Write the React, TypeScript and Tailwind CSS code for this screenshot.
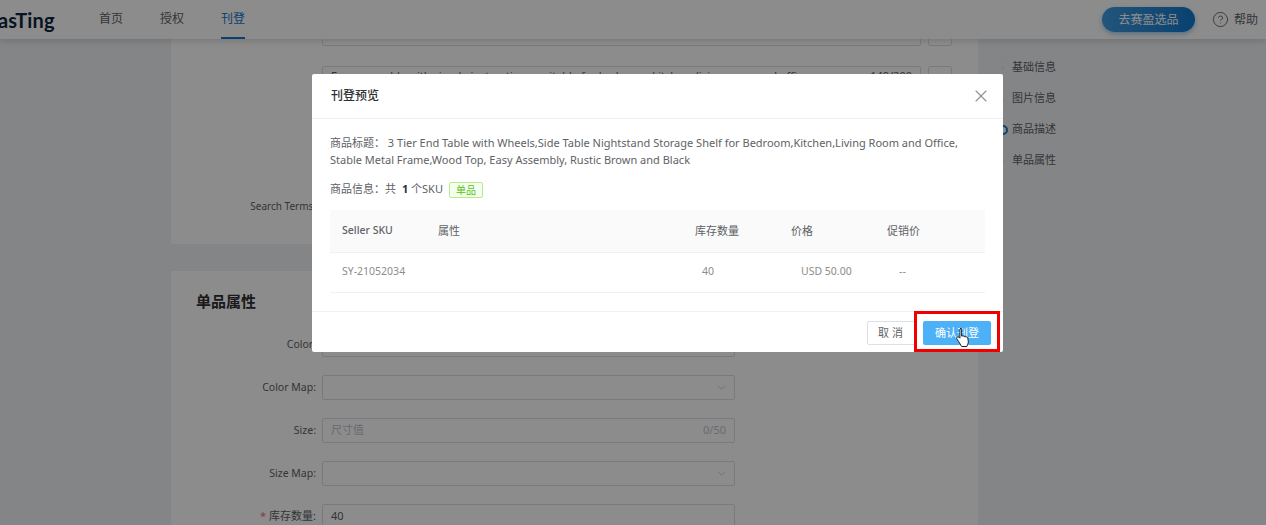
import React from 'react';
import { ChevronDown, CircleHelp, X } from 'lucide-react';

const font = "font-['Noto_Sans','Noto_Sans_CJK_SC',sans-serif]";

const SelectField: React.FC<{ label: string }> = ({ label }) => (
  <div className="flex items-center h-[25px]">
    <label className="w-[151px] pr-[6px] text-right text-[10.5px] text-[#606266]">{label}:</label>
    <div className="w-[413px] h-[25px] border border-[#dcdfe6] rounded-[2px] bg-white flex items-center justify-end pr-[6px]">
      <ChevronDown size={13} strokeWidth={1.5} className="text-[#c0c4cc]" />
    </div>
  </div>
);

const Anchor: React.FC<{ text: string; active?: boolean }> = ({ text, active }) => (
  <div className="flex items-center h-[31px]">
    <span
      className={
        active
          ? 'w-[10px] h-[10px] ml-[-5px] mr-[4px] rounded-full border-2 border-[#1677c9] bg-white'
          : 'w-[4px] h-[4px] ml-[-2px] mr-[7px] rounded-full bg-[#e8eaef]'
      }
    />
    <span className="text-[11px] text-[#606266]">{text}</span>
  </div>
);

const ListingPage: React.FC = () => (
  <div className="h-full flex flex-col bg-[#f0f2f5]">
    <header className="h-[39px] shrink-0 bg-white shadow-[0_2px_6px_rgba(0,0,0,0.15)] flex items-center relative z-10">
      <span className="ml-[-2px] w-[101px] font-['Lato',sans-serif] text-[20px] font-bold tracking-[0.2px] text-[#12263f]">asTing</span>
      <nav className="flex gap-[37px] text-[12px] text-[#5f6368] h-full">
        <a className="leading-[38px]">首页</a>
        <a className="leading-[38px]">授权</a>
        <a className="leading-[38px] text-[#1677c9] border-b-2 border-[#1677c9] h-[39px]">刊登</a>
      </nav>
      <div className="ml-auto flex items-center mr-[1px]">
        <button className="w-[93px] h-[25px] rounded-full bg-gradient-to-r from-[#3f9be0] to-[#0d78cc] text-white text-[12px] shadow-[0_2px_5px_rgba(13,120,204,0.4)]">去赛盈选品</button>
        <CircleHelp size={17} strokeWidth={1.3} className="ml-[17px] text-[#606266]" />
        <span className="ml-[5px] mr-[7px] text-[12px] text-[#606266]">帮助</span>
      </div>
    </header>
    <main className="flex-1 min-h-0 overflow-hidden flex pl-[171px]">
      <div className="w-[807px] shrink-0 flex flex-col">
        <section className="h-[205px] shrink-0 bg-white overflow-hidden pl-[151px] pr-[26px] flex flex-col">
          <div className="flex gap-[7px] mt-[-12px]">
            <div className="flex-1 h-[19px] border border-[#dcdfe6] rounded-[2px] pl-[8px] text-[11px] leading-[8px] text-[#606266] overflow-hidden whitespace-nowrap">
              Storage Organizer Shelf, Fully Assembled, Easy to Clean Top for Everyday Use
            </div>
            <div className="w-[24px] h-[19px] border border-[#dcdfe6] rounded-[2px]" />
          </div>
          <div className="flex gap-[7px] mt-[20px]">
            <div className="flex-1 h-[25px] border border-[#dcdfe6] rounded-[2px] px-[8px] pt-[2px] text-[11px] leading-[14px] text-[#606266] overflow-hidden whitespace-nowrap flex justify-between">
              <span>Easy assembly with simple instructions, suitable for bedroom, kitchen, living room and office</span>
              <span>149/200</span>
            </div>
            <div className="w-[24px] h-[25px] border border-[#dcdfe6] rounded-[2px]" />
          </div>
          <label className="mt-[108px] ml-[-151px] w-[145px] text-right text-[10px] leading-[14px] text-[#606266] whitespace-nowrap">Search Terms:</label>
        </section>
        <section className="mt-[27px] flex-1 bg-white pt-[20px]">
          <h2 className="pl-[25px] text-[15px] leading-[20px] font-semibold text-[#303133]">单品属性</h2>
          <div className="mt-[21px] flex flex-col gap-[18px]">
            <SelectField label="Color" />
            <SelectField label="Color Map" />
            <div className="flex items-center h-[25px]">
              <label className="w-[151px] pr-[6px] text-right text-[10.5px] text-[#606266]">Size:</label>
              <div className="w-[413px] h-[25px] border border-[#dcdfe6] rounded-[2px] bg-white flex items-center justify-between px-[8px] text-[11px]">
                <span className="text-[#c0c4cc]">尺寸值</span>
                <span className="text-[#c0c4cc]">0/50</span>
              </div>
            </div>
            <SelectField label="Size Map" />
            <div className="flex items-center h-[25px]">
              <label className="w-[151px] pr-[6px] text-right text-[11px] text-[#606266]"><span className="text-[#f56c6c] mr-[3px]">*</span>库存数量:</label>
              <div className="w-[413px] h-[25px] border border-[#dcdfe6] rounded-[2px] bg-white flex items-center px-[8px] text-[11px] text-[#606266]">40</div>
            </div>
          </div>
        </section>
      </div>
      <aside className="ml-[24px] mt-[13px] h-[124px] border-l border-[#eceef2]">
        <Anchor text="基础信息" />
        <Anchor text="图片信息" />
        <Anchor text="商品描述" active />
        <Anchor text="单品属性" />
      </aside>
    </main>
  </div>
);

const HandCursor: React.FC = () => (
  <svg className="absolute left-[955px] top-[327px] z-40" width="20" height="22" viewBox="0 0 20 22">
    <path
      d="M6 1.5c1 0 1.6.7 1.6 1.6v6l1-.2c.6-.1 1.2.1 1.5.6.6-.3 1.4-.1 1.8.5.7-.3 1.5 0 1.8.7l.6 3.4c.2 1.3-.1 2.6-.8 3.6l-.6 1.8H7.6L4.7 14.6 2.9 12c-.5-.7-.3-1.5.3-1.9.6-.4 1.3-.3 1.8.2l.9.9V3.1c0-.9.6-1.6 1.6-1.6z"
      transform="translate(-1 0)"
      fill="#fff"
      stroke="#222"
      strokeWidth="1"
      strokeLinejoin="round"
    />
  </svg>
);

const PreviewDialog: React.FC = () => (
  <div className="absolute z-30 left-[312px] top-[74px] w-[691px] h-[278px] bg-white rounded-[2px] flex flex-col text-[#606266]">
    <div className="h-[45px] shrink-0 border-b border-[#f0f0f0] flex items-center justify-between pl-[19px] pr-[12px]">
      <span className="text-[12px] font-medium text-[#303133]">刊登预览</span>
      <X size={20} strokeWidth={1.4} className="text-[#909399]" />
    </div>
    <div className="flex-1 min-h-0 px-[18px] pt-[15px]">
      <p className="text-[11px] leading-[17px]">商品标题：&nbsp;3 Tier End Table with Wheels,Side Table Nightstand Storage Shelf for Bedroom,Kitchen,Living Room and Office, Stable Metal Frame,Wood Top, Easy Assembly, Rustic Brown and Black</p>
      <div className="mt-[13px] flex items-center text-[11px] h-[17px]">
        <span>商品信息：共&nbsp;</span>
        <b className="font-bold text-[#303133] ml-[3px]">1</b>
        <span>&nbsp;个SKU</span>
        <span className="ml-[6px] h-[16px] px-[6px] border border-[#b7eb8f] bg-[#f6ffed] rounded-[2px] text-[10px] leading-[14px] text-[#52c41a]">单品</span>
      </div>
      <table className="mt-[12px] w-[655px] table-fixed text-[11px]">
        <thead>
          <tr className="h-[42px] bg-[#fafafa] border-b border-[#f0f0f0] text-left">
            <th className="w-[108px] pl-[12px] pt-[1px] text-[10.5px] font-medium">Seller SKU</th>
            <th className="w-[257px] pt-[1px] font-normal">属性</th>
            <th className="w-[96px] pt-[1px] font-normal">库存数量</th>
            <th className="w-[96px] pt-[1px] font-normal">价格</th>
            <th className="pt-[1px] font-normal">促销价</th>
          </tr>
        </thead>
        <tbody>
          <tr className="h-[40px] border-b border-[#f0f0f0] text-[10.5px] text-[#8c8c8c]">
            <td className="pl-[12px]">SY-21052034</td>
            <td />
            <td className="pl-[7px]">40</td>
            <td className="pl-[10px]">USD 50.00</td>
            <td className="pl-[12px]">--</td>
          </tr>
        </tbody>
      </table>
    </div>
    <div className="h-[41px] shrink-0 border-t border-[#f0f0f0] flex items-center justify-end gap-[6px] pr-[12px] pt-[2px]">
      <button className="w-[50px] h-[24px] border border-[#dcdfe6] rounded-[2px] text-[11px] tracking-[3px] text-[#606266]">取消</button>
      <button className="w-[68px] h-[24px] rounded-[2px] bg-[#4db1f7] text-white text-[11px]">确认刊登</button>
    </div>
  </div>
);

export default function App() {
  return (
    <div className={`relative h-screen overflow-hidden ${font}`}>
      <ListingPage />
      <div className="absolute inset-0 z-20 bg-black/45" />
      <PreviewDialog />
      <div className="absolute z-40 left-[914px] top-[311px] w-[86px] h-[41px] border-[3px] border-[#f00000]" />
      <HandCursor />
    </div>
  );
}
